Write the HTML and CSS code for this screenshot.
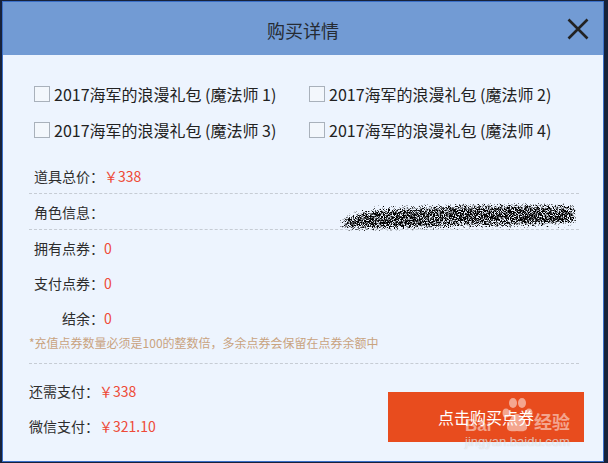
FILE: index.html
```html
<!DOCTYPE html>
<html lang="zh-CN">
<head>
<meta charset="utf-8">
<title>购买详情</title>
<link rel="stylesheet" href="styles.css">
</head>
<body>
<div class="dialog">
  <div class="header">
    <span></span>
    <div class="title">购买详情</div>
    <svg class="close" width="22" height="22" viewBox="0 0 22 22"><path d="M1.5 1.5 L20.5 20.5 M20.5 1.5 L1.5 20.5" stroke="#222" stroke-width="2.6" fill="none"/></svg>
  </div>
  <div class="main">
    <div class="options">
      <label class="opt"><span class="box"></span>2017海军的浪漫礼包 (魔法师 1)</label>
      <label class="opt"><span class="box"></span>2017海军的浪漫礼包 (魔法师 2)</label>
      <label class="opt"><span class="box"></span>2017海军的浪漫礼包 (魔法师 3)</label>
      <label class="opt"><span class="box"></span>2017海军的浪漫礼包 (魔法师 4)</label>
    </div>
    <div class="info">
      <div class="row dashed"><span class="label">道具总价：</span><span class="val">￥338</span></div>
      <div class="row dashed"><span class="label">角色信息：</span>
        <svg class="scribble" width="242" height="34" viewBox="0 0 242 34">
          <defs>
            <filter id="speckle" x="0" y="0" width="100%" height="100%" color-interpolation-filters="sRGB">
              <feGaussianBlur in="SourceAlpha" stdDeviation="3" result="blob"/>
              <feTurbulence type="fractalNoise" baseFrequency="1.2" numOctaves="2" seed="11" result="n"/>
              <feColorMatrix in="n" type="matrix" values="0 0 0 0 0  0 0 0 0 0  0 0 0 0 0  1 0 0 0 0" result="na"/>
              <feComposite in="na" in2="blob" operator="arithmetic" k1="0" k2="5" k3="2.6" k4="-4.3"/>
            </filter>
          </defs>
          <path filter="url(#speckle)" d="M3 24 C6 12 40 8 80 7 C130 4 180 4 238 6 L240 25 C200 29 150 28 110 29 C70 31 30 33 5 30 Z" fill="#000"/>
        </svg>
      </div>
      <div class="row short"><span class="label">拥有点券：</span><span class="val">0</span></div>
      <div class="row short"><span class="label">支付点券：</span><span class="val">0</span></div>
      <div class="row short"><span class="label">结余：</span><span class="val">0</span></div>
      <div class="note">*充值点券数量必须是100的整数倍，多余点券会保留在点券余额中</div>
    </div>
    <div class="pay">
      <div class="pay-rows">
        <div class="pay-row"><span>还需支付：</span><span class="val">￥338</span></div>
        <div class="pay-row"><span>微信支付：</span><span class="val">￥321.10</span></div>
      </div>
      <div class="buy">
        <span>点击购买点券</span>
        <div class="watermark">
          <span class="wm-bai">Bai</span>
          <svg class="paw" width="32" height="36" viewBox="0 0 32 36">
            <ellipse cx="5" cy="16" rx="3.5" ry="4.5" fill="currentColor"/>
            <ellipse cx="12" cy="6" rx="4" ry="5" fill="currentColor"/>
            <ellipse cx="21" cy="6" rx="4" ry="5" fill="currentColor"/>
            <ellipse cx="28" cy="16" rx="3.5" ry="4.5" fill="currentColor"/>
            <path d="M16 17 C11 17 7 25 6 29 C5 34 10 35 16 34 C22 35 27 34 26 29 C25 25 21 17 16 17 Z" fill="currentColor"/>
          </svg>
          <span class="wm-jy">经验</span>
          <span class="wm-url">jingyan.baidu.com</span>
        </div>
      </div>
    </div>
  </div>
</div>
</body>
</html>
```
FILE: styles.css
```css
* { box-sizing: border-box; }
body {
  margin: 0;
  background: #17223a;
  font-family: "Noto Sans CJK SC", "Microsoft YaHei", sans-serif;
  color: #2b2b2b;
}
.dialog {
  margin: 1px 4px 0 2px;
  height: 461px;
  border: 1px solid #3a6fc8;
  background: #edf4fe;
  display: flex;
  flex-direction: column;
}
.header {
  height: 53px;
  background: #729bd4;
  display: grid;
  grid-template-columns: 1fr auto 1fr;
  align-items: center;
}
.title {
  font-size: 18px;
  line-height: 24px;
  color: #262b33;
  padding-top: 3px;
}
.close {
  justify-self: end;
  margin-right: 14px;
  display: block;
}
.main {
  padding: 28px 19px 0 26px;
}
.options {
  display: grid;
  grid-template-columns: 275px 275px;
  row-gap: 14px;
  padding-left: 5px;
}
.opt {
  display: flex;
  align-items: center;
  gap: 4px;
  font-size: 16px;
  line-height: 22px;
  color: #222;
  white-space: nowrap;
}
.box {
  width: 16px;
  height: 16px;
  border: 1px solid #a9b1bb;
  background: #f3f7fc;
  flex: none;
}
.info {
  margin-top: 17px;
  margin-right: 5px;
}
.row {
  display: flex;
  align-items: center;
  height: 36px;
  padding-left: 5px;
  font-size: 14px;
}
.row.short { height: 35px; }
.dashed { border-bottom: 1px dashed #c6ccd4; }
.label {
  width: 70px;
  text-align: right;
  color: #2d2d2d;
  white-space: nowrap;
}
.val { color: #ee4a38; }
.scribble {
  margin-left: auto;
  margin-right: 0;
  align-self: flex-end;
  margin-bottom: -4px;
  display: block;
}
.note {
  font-size: 12px;
  line-height: 16px;
  color: #c9a37e;
  padding-bottom: 12px;
  border-bottom: 1px dashed #c6ccd4;
  white-space: nowrap;
}
.pay {
  display: flex;
  justify-content: space-between;
  align-items: flex-start;
}
.pay-rows {
  padding-top: 10px;
  font-size: 14px;
}
.pay-row {
  line-height: 35px;
  color: #2d2d2d;
}
.buy {
  position: relative;
  margin-top: 28px;
  width: 196px;
  height: 50px;
  background: #e84c1e;
  color: #fff;
  font-size: 16px;
  display: flex;
  align-items: center;
  justify-content: center;
}
.watermark {
  position: absolute;
  left: 77px;
  top: 3px;
  width: 112px;
  height: 56px;
  color: rgba(255, 255, 255, 0.5);
  pointer-events: none;
}
.wm-bai {
  position: absolute;
  left: 0;
  top: 21px;
  font-family: "Liberation Sans", sans-serif;
  font-weight: bold;
  font-size: 17px;
  line-height: 20px;
}
.paw {
  position: absolute;
  left: 36px;
  top: 2px;
}
.wm-jy {
  position: absolute;
  left: 69px;
  top: 15px;
  font-size: 18px;
  font-weight: bold;
  line-height: 22px;
}
.wm-url {
  position: absolute;
  left: 0;
  top: 40px;
  font-family: "Liberation Sans", sans-serif;
  font-size: 13px;
  line-height: 14px;
  color: rgba(255, 255, 255, 0.6);
  text-shadow: 0 0 1px rgba(120, 120, 120, 0.35);
  white-space: nowrap;
}
```
